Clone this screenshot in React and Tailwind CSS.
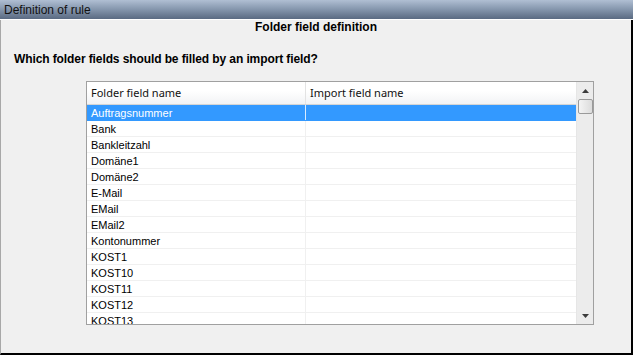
import React from "react";

const rows = [
  "Auftragsnummer",
  "Bank",
  "Bankleitzahl",
  "Domäne1",
  "Domäne2",
  "E-Mail",
  "EMail",
  "EMail2",
  "Kontonummer",
  "KOST1",
  "KOST10",
  "KOST11",
  "KOST12",
  "KOST13",
];

export default function App() {
  return (
    <div
      className="w-[633px] h-[355px] flex flex-col bg-[#f0f0f0] overflow-hidden"
      style={{ fontFamily: '"Liberation Sans", Arial, sans-serif' }}
    >
      <div className="h-[19px] shrink-0 flex items-center pl-[4px] pt-px bg-gradient-to-b from-[#b0bfd3] via-[#8495ac] to-[#5a6a82] text-[12px] text-[#111] leading-none">
        Definition of rule
      </div>
      <div className="h-px shrink-0 bg-white" />
      <div className="flex-1 flex flex-col border-l border-l-[#a8a8a8] border-r-2 border-r-black border-b-2 border-b-black">
        <div className="h-[14px] text-center font-bold text-[12px] leading-[14px] text-black">
          Folder field definition
        </div>
        <div className="mt-[18px] ml-[13px] font-bold text-[12px] leading-[14px] tracking-[-0.1px] text-black">
          Which folder fields should be filled by an import field?
        </div>
        <div className="mt-[15px] ml-[85px] w-[508px] h-[244px] shrink-0 border border-[#a0a0a0] bg-white flex overflow-hidden">
          <div className="flex-1 flex flex-col overflow-hidden">
            <div
              className="h-[23px] shrink-0 flex border-b border-b-[#d5d5d5] bg-gradient-to-b from-white from-40% to-[#f2f3f5] text-[#111]"
              style={{ fontFamily: '"Noto Sans", sans-serif' }}
            >
              <div className="w-[219px] border-r border-r-[#e3e3e3] pl-[4px] flex items-center text-[11px]">
                Folder field name
              </div>
              <div className="flex-1 pl-[4px] flex items-center text-[11px]">
                Import field name
              </div>
            </div>
            {rows.map((r, i) => (
              <div
                key={r}
                className={
                  "h-[16px] shrink-0 flex border-b text-[11px] leading-none " +
                  (i === 0
                    ? "bg-[#3399ff] text-white border-b-[#3399ff]"
                    : "bg-white text-black border-b-[#f0f0f0]")
                }
              >
                <div
                  className={
                    "w-[219px] pl-[4px] pt-px flex items-center border-r " +
                    (i === 0 ? "border-r-[#d9ecff]" : "border-r-[#f0f0f0]")
                  }
                >
                  {r}
                </div>
                <div className="flex-1" />
              </div>
            ))}
          </div>
          <div className="w-[17px] shrink-0 bg-[#ececec] border-l border-l-[#e6e6e6] flex flex-col items-center">
            <div className="h-[17px] w-full flex items-center justify-center">
              <svg width="7" height="4" viewBox="0 0 7 4">
                <path d="M3.5 0 L7 4 L0 4 Z" fill="#3c3c3c" />
              </svg>
            </div>
            <div className="w-[15px] h-[15px] border border-[#9a9a9a] rounded-[2px] bg-gradient-to-r from-[#f4f4f4] to-[#dcdcdc]" />
            <div className="flex-1" />
            <div className="h-[17px] w-full flex items-center justify-center">
              <svg width="7" height="4" viewBox="0 0 7 4">
                <path d="M0 0 L7 0 L3.5 4 Z" fill="#3c3c3c" />
              </svg>
            </div>
          </div>
        </div>
      </div>
    </div>
  );
}
